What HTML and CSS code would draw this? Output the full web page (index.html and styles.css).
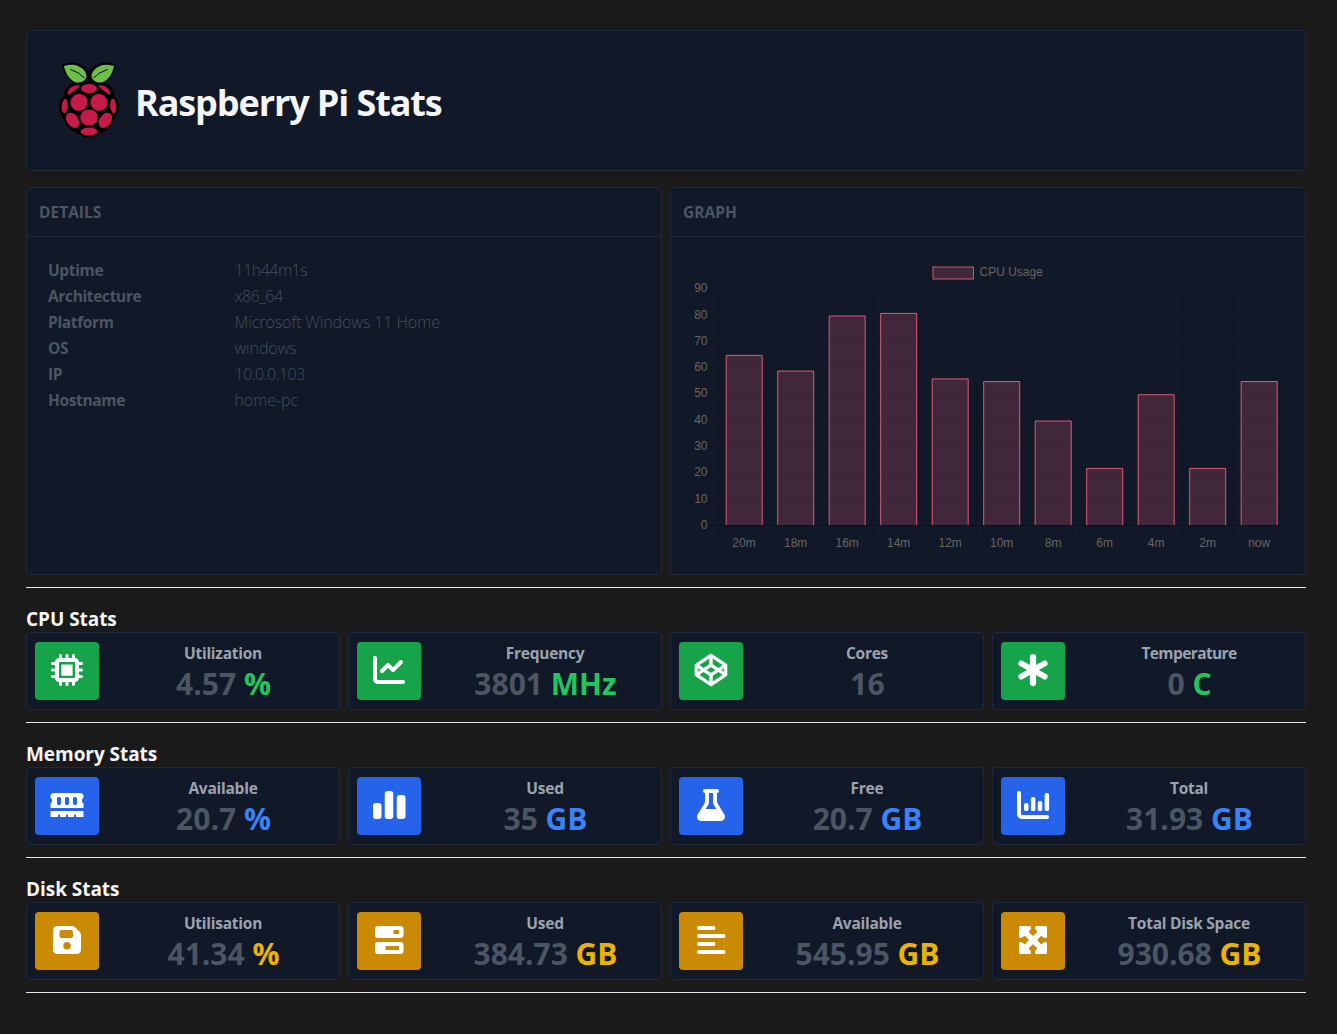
FILE: index.html
```html
<!DOCTYPE html>
<html lang="en">
<head>
<meta charset="utf-8">
<title>Raspberry Pi Stats</title>
<link rel="stylesheet" href="styles.css">
</head>
<body>
<main class="page">
  <header class="card banner">
    <svg class="logo" viewBox="0 0 60 76" aria-hidden="true">
      <path stroke="#000" stroke-width="1.200" d="M30 20C27 21 22 20 17 20C10 19 5 11 4 4C3 2 5 2 7 2C13 0 26 1 30 12C34 1 47 0 53 2C55 2 57 2 56 4C55 11 50 19 43 20L49 23C54 27 55 31 55 35C59 39 60 44 59 48C58 52 56 55 54 58C52 66 44 70 39 72C34 76 26 76 21 72C16 70 8 66 6 58C4 55 2 52 1 48C0 44 1 39 5 35C5 31 6 27 11 23L17 20Z"/>
      <g fill="#6cc04a">
        <path d="M5 4L9 3L13 2.700C21 3 27 8 27.500 14C27 19 22 21 17 20.500C11 18 7 13 5 4Z"/>
        <path d="M55 4L51 3L47 2.700C39 3 33 8 32.500 14C33 19 38 21 43 20.500C49 18 53 13 55 4Z"/>
      </g>
      <path d="M11.500 7.500Q20 10 25.500 16M48.500 7.500Q40 10 34.500 16" fill="none" stroke="#000" stroke-width="1"/>
      <g fill="#c51a4a">
        <ellipse cx="30" cy="26.500" rx="8" ry="4.500"/>
        <path d="M9 33C8 27 14 22 21 23.500C18 27 14 30 9 33ZM51 33C52 27 46 22 39 23.500C42 27 46 30 51 33Z"/>
        <ellipse cx="20" cy="40.300" rx="8.700" ry="8.400" transform="rotate(-35 20 40.300)"/>
        <ellipse cx="40" cy="40.300" rx="8.700" ry="8.400" transform="rotate(35 40 40.300)"/>
        <ellipse cx="5.800" cy="44" rx="3" ry="7.300" transform="rotate(5 5.800 44)"/>
        <ellipse cx="54.200" cy="44" rx="3" ry="7.300" transform="rotate(-5 54.200 44)"/>
        <ellipse cx="30" cy="55.500" rx="8.800" ry="8"/>
        <ellipse cx="13.600" cy="58.300" rx="5.700" ry="8.400" transform="rotate(-35 13.600 58.300)"/>
        <ellipse cx="46.400" cy="58.300" rx="5.700" ry="8.400" transform="rotate(35 46.400 58.300)"/>
        <ellipse cx="30" cy="69.500" rx="8.400" ry="4"/>
      </g>
    </svg>
    <h1>Raspberry Pi Stats</h1>
  </header>

  <div class="panels">
    <section class="card panel">
      <h2 class="panel-title">DETAILS</h2>
      <dl class="details">
        <dt>Uptime</dt><dd class="num">11h44m1s</dd>
        <dt>Architecture</dt><dd class="num">x86_64</dd>
        <dt>Platform</dt><dd>Microsoft Windows 11 Home</dd>
        <dt>OS</dt><dd>windows</dd>
        <dt>IP</dt><dd class="num">10.0.0.103</dd>
        <dt>Hostname</dt><dd>home-pc</dd>
      </dl>
    </section>
    <section class="card panel">
      <h2 class="panel-title">GRAPH</h2>
      <svg class="chart" viewBox="0 0 634 337">
        <path class="grid" d="M37.500 52.500H614M37.500 78.500H614M37.500 104.500H614M37.500 130.500H614M37.500 157.500H614M37.500 183.500H614M37.500 209.500H614M37.500 236.500H614M37.500 262.500H614M37.500 288.500H614M99.500 52V298M150.500 52V298M202.500 52V298M253.500 52V298M305.500 52V298M356.500 52V298M408.500 52V298M459.500 52V298M511.500 52V298M562.500 52V298"/>
        <path class="grid axis" d="M47.500 52V298M37.500 288.500H614"/>
        <rect class="key" x="262" y="30" width="40.500" height="12"/>
        <text class="legend" x="308.500" y="39">CPU Usage</text>
        <g class="bars">
          <path d="M55.200 288V118.400H91.200V288"/>
          <path d="M106.700 288V134.100H142.700V288"/>
          <path d="M158.200 288V79H194.200V288"/>
          <path d="M209.700 288V76.400H245.700V288"/>
          <path d="M261.200 288V141.900H297.200V288"/>
          <path d="M312.700 288V144.500H348.700V288"/>
          <path d="M364.200 288V184H400.200V288"/>
          <path d="M415.700 288V231.400H451.700V288"/>
          <path d="M467.200 288V157.700H503.200V288"/>
          <path d="M518.700 288V231.400H554.700V288"/>
          <path d="M570.200 288V144.500H606.200V288"/>
        </g>
        <g class="ticks-y">
          <text x="36.500" y="55">90</text><text x="36.500" y="82">80</text><text x="36.500" y="108">70</text><text x="36.500" y="134">60</text><text x="36.500" y="160">50</text><text x="36.500" y="187">40</text><text x="36.500" y="213">30</text><text x="36.500" y="239">20</text><text x="36.500" y="266">10</text><text x="36.500" y="292">0</text>
        </g>
        <g class="ticks-x">
          <text x="73" y="310">20m</text><text x="124.700" y="310">18m</text><text x="176.200" y="310">16m</text><text x="227.700" y="310">14m</text><text x="279.200" y="310">12m</text><text x="330.700" y="310">10m</text><text x="382.200" y="310">8m</text><text x="433.700" y="310">6m</text><text x="485.200" y="310">4m</text><text x="536.700" y="310">2m</text><text x="588.200" y="310">now</text>
        </g>
      </svg>
    </section>
  </div>

  <section class="group green">
    <h2>CPU Stats</h2>
    <div class="stats">
      <article class="card stat">
        <div class="icon"><svg viewBox="0 0 512 512"><path fill-rule="evenodd" d="M176 24c0-13.300-10.700-24-24-24s-24 10.700-24 24v40c-35.300 0-64 28.700-64 64H24c-13.300 0-24 10.700-24 24s10.700 24 24 24h40v56H24c-13.300 0-24 10.700-24 24s10.700 24 24 24h40v56H24c-13.300 0-24 10.700-24 24s10.700 24 24 24h40c0 35.300 28.700 64 64 64v40c0 13.300 10.700 24 24 24s24-10.700 24-24v-40h56v40c0 13.300 10.700 24 24 24s24-10.700 24-24v-40h56v40c0 13.300 10.700 24 24 24s24-10.700 24-24v-40c35.300 0 64-28.700 64-64h40c13.300 0 24-10.700 24-24s-10.700-24-24-24h-40v-56h40c13.300 0 24-10.700 24-24s-10.700-24-24-24h-40v-56h40c13.300 0 24-10.700 24-24s-10.700-24-24-24h-40c0-35.300-28.700-64-64-64V24c0-13.300-10.700-24-24-24s-24 10.700-24 24v40h-56V24c0-13.300-10.700-24-24-24s-24 10.700-24 24v40h-56V24zM144 128h224c8.800 0 16 7.200 16 16v224c0 8.800-7.200 16-16 16H144c-8.800 0-16-7.200-16-16V144c0-8.800 7.200-16 16-16zM346 166H166v180h180V166z"/></svg></div>
        <div class="reading"><h3>Utilization</h3><p>4.57 <b>%</b></p></div>
      </article>
      <article class="card stat">
        <div class="icon"><svg viewBox="0 0 512 512"><path d="M64 64c0-17.700-14.300-32-32-32S0 46.300 0 64V400c0 44.200 35.800 80 80 80H480c17.700 0 32-14.300 32-32s-14.300-32-32-32H80c-8.800 0-16-7.200-16-16V64zm406.600 86.600c12.500-12.500 12.500-32.800 0-45.300s-32.800-12.500-45.300 0L320 210.700l-57.400-57.400c-12.500-12.500-32.800-12.500-45.300 0l-96 96c-12.500 12.500-12.500 32.800 0 45.300s32.800 12.500 45.300 0L240 221.300l57.400 57.400c12.500 12.500 32.800 12.500 45.300 0l128-128z"/></svg></div>
        <div class="reading"><h3>Frequency</h3><p>3801 <b>MHz</b></p></div>
      </article>
      <article class="card stat">
        <div class="icon"><svg viewBox="0 0 512 512"><path stroke="#fff" stroke-width="10" d="M502.285 159.704l-234-156c-7.987-4.915-16.511-4.960-24.571 0l-234 156C3.714 163.703 0 170.847 0 177.989v155.999c0 7.143 3.714 14.286 9.715 18.286l234 156.022c7.987 4.915 16.511 4.960 24.571 0l234-156.022c6-3.999 9.715-11.143 9.715-18.286V177.989c-.001-7.142-3.715-14.286-9.716-18.285zM278 63.131l172.286 114.858-76.857 51.429L278 165.703V63.131zm-44 0v102.572l-95.429 63.715-76.857-51.429L234 63.131zM44 219.132l55.143 36.857L44 292.847v-73.715zm190 229.715L61.714 333.989l76.857-51.429L234 346.275v102.572zm22-140.858l-77.715-52 77.715-52 77.715 52-77.715 52zm22 140.858V346.275l95.429-63.715 76.857 51.429L278 448.847zm190-156l-55.143-36.857L468 219.132v73.715z"/></svg></div>
        <div class="reading"><h3>Cores</h3><p>16</p></div>
      </article>
      <article class="card stat">
        <div class="icon"><svg viewBox="0 0 512 512"><g fill="none" stroke="#fff" stroke-width="96" stroke-linecap="round"><path d="M256 48V464" stroke-width="100"/><path d="M70 152L442 360M442 152L70 360"/></g></svg></div>
        <div class="reading"><h3 class="tight">Temperature</h3><p>0 <b>C</b></p></div>
      </article>
    </div>
  </section>

  <section class="group blue">
    <h2>Memory Stats</h2>
    <div class="stats">
      <article class="card stat">
        <div class="icon"><svg viewBox="0 0 512 512"><path fill-rule="evenodd" d="M48 64H464C490 64 520 82 520 108V140C502 148 494 168 494 184S502 222 520 230V304H-8V230C10 222 18 202 18 184S10 148 -8 140V108C-8 82 22 64 48 64ZM128 128C112 128 96 138 96 160V224C96 246 112 256 128 256S160 246 160 224V160C160 138 144 128 128 128ZM256 128C240 128 224 138 224 160V224C224 246 240 256 256 256S288 246 288 224V160C288 138 272 128 256 128ZM384 128C368 128 352 138 352 160V224C352 246 368 256 384 256S416 246 416 224V160C416 138 400 128 384 128ZM-8 352H520V448H400V424A16 16 0 0 0 368 424V448H272V424A16 16 0 0 0 240 424V448H144V424A16 16 0 0 0 112 424V448H-8Z"/></svg></div>
        <div class="reading"><h3>Available</h3><p>20.7 <b>%</b></p></div>
      </article>
      <article class="card stat">
        <div class="icon"><svg viewBox="0 0 512 512"><rect x="0" y="224" width="136" height="256" rx="44"/><rect x="188" y="32" width="136" height="448" rx="44"/><rect x="380" y="96" width="140" height="384" rx="44"/></svg></div>
        <div class="reading"><h3>Used</h3><p>35 <b>GB</b></p></div>
      </article>
      <article class="card stat">
        <div class="icon"><svg viewBox="-32 0 512 512"><path d="M288 0H160 128C110.300 0 96 14.300 96 32s14.300 32 32 32V196.800c0 11.800-3.300 23.500-9.500 33.500L10.300 406.200C3.600 417.200 0 429.700 0 442.600C0 480.900 31.100 512 69.400 512H378.600c38.300 0 69.400-31.100 69.400-69.400c0-12.800-3.600-25.400-10.300-36.400L329.500 230.400c-6.200-10.100-9.500-21.700-9.500-33.500V64c17.700 0 32-14.300 32-32s-14.300-32-32-32H288zM192 196.800V64h64V196.800c0 23.700 6.600 46.900 19 67.100L309.500 320h-171L173 263.900c12.400-20.200 19-43.400 19-67.100z"/></svg></div>
        <div class="reading"><h3>Free</h3><p>20.7 <b>GB</b></p></div>
      </article>
      <article class="card stat">
        <div class="icon"><svg viewBox="0 0 512 512"><path d="M64 64c0-17.700-14.300-32-32-32S0 46.300 0 64V400c0 44.200 35.800 80 80 80H480c17.700 0 32-14.300 32-32s-14.300-32-32-32H80c-8.800 0-16-7.200-16-16V64z"/><rect x="112" y="224" width="72" height="128" rx="30"/><rect x="222" y="128" width="72" height="224" rx="30"/><rect x="332" y="192" width="72" height="160" rx="30"/><rect x="442" y="64" width="72" height="288" rx="30"/></svg></div>
        <div class="reading"><h3>Total</h3><p>31.93 <b>GB</b></p></div>
      </article>
    </div>
  </section>

  <section class="group amber">
    <h2>Disk Stats</h2>
    <div class="stats">
      <article class="card stat">
        <div class="icon"><svg viewBox="-32 0 512 512"><path fill-rule="evenodd" d="M64 32C28.700 32 0 60.700 0 96V416c0 35.300 28.700 64 64 64H384c35.300 0 64-28.700 64-64V173.300c0-17-6.700-33.300-18.700-45.300L352 50.700C340 38.700 323.700 32 306.700 32H64zM104 128c0-17.700 14.300-32 32-32H288c17.700 0 32 14.300 32 32v64c0 17.700-14.300 32-32 32H136c-17.700 0-32-14.300-32-32V128zM224 288a60 60 0 1 1 0 120 60 60 0 1 1 0-120z"/></svg></div>
        <div class="reading"><h3>Utilisation</h3><p>41.34 <b>%</b></p></div>
      </article>
      <article class="card stat">
        <div class="icon"><svg viewBox="-32 0 512 512"><path fill-rule="evenodd" d="M48 32H408A48 48 0 0 1 456 80V176A48 48 0 0 1 408 224H48A48 48 0 0 1 0 176V80A48 48 0 0 1 48 32ZM296 96V160H384V96ZM48 288H408A48 48 0 0 1 456 336V432A48 48 0 0 1 408 480H48A48 48 0 0 1 0 432V336A48 48 0 0 1 48 288ZM168 352V416H384V352Z"/></svg></div>
        <div class="reading"><h3>Used</h3><p>384.73 <b>GB</b></p></div>
      </article>
      <article class="card stat">
        <div class="icon"><svg viewBox="-32 0 512 512"><path d="M32 64H264M32 192H424M32 320H264M32 448H424" stroke="#fff" stroke-width="64" stroke-linecap="round"/></svg></div>
        <div class="reading"><h3>Available</h3><p>545.95 <b>GB</b></p></div>
      </article>
      <article class="card stat">
        <div class="icon"><svg viewBox="0 0 512 512"><path d="M48 32H208L224 48V72L186 126L256 190L326 126L288 72V48L304 32H464L480 48V208L464 224H440L386 186L322 256L386 326L440 288H464L480 304V464L464 480H304L288 464V440L326 386L256 322L186 386L224 440V464L208 480H48L32 464V304L48 288H72L126 326L190 256L126 186L72 224H48L32 208V48Z"/></svg></div>
        <div class="reading"><h3>Total Disk Space</h3><p>930.68 <b>GB</b></p></div>
      </article>
    </div>
  </section>
</main>
</body>
</html>
```

FILE: styles.css
```css
* { box-sizing: border-box; margin: 0; padding: 0; }
body { background: #1a1a1a; color: #f3f4f6; font: 16px/24px "Open Sans", "Noto Sans", sans-serif; }
svg { overflow: visible; }
.page { width: 1280px; margin: 30px 0 0 26px; }
.card { background: #111827; border: 1px solid #1f2937; border-radius: 4px; }
.banner { height: 141px; display: flex; align-items: center; padding: 0 32px; gap: 16px; }
.logo { width: 60px; height: 76px; margin-bottom: 1px; }
h1 { font-size: 36px; line-height: 40px; font-weight: 700; padding-top: 5px; letter-spacing: -1.1px; }
.panels { display: grid; grid-template-columns: 1fr 1fr; gap: 8px; margin-top: 16px; padding-bottom: 12px; border-bottom: 1px solid #e5e7eb; }
.panel { height: 388px; }
.panel-title { height: 49px; padding: 12px; font-size: 15.5px; line-height: 25px; color: #4b5563; border-bottom: 1px solid #1f2937; }
.details { display: grid; grid-template-columns: 186px 1fr; grid-auto-rows: 26px; line-height: 26px; padding: 20px 21px; }
.details dt { font-size: 15.5px; letter-spacing: -.35px; font-weight: 700; color: #4b5563; }
.details dd { font-weight: 300; padding-left: .5px; letter-spacing: -.08px; color: #434f60; }
.details .num { letter-spacing: -.5px; }
.chart { display: block; width: 634px; height: 337px; font: 12px "Liberation Sans", Arial, sans-serif; }
.chart text { fill: #666; }
.grid { stroke: rgba(0, 0, 0, .1); fill: none; }
.axis { stroke: rgba(0, 0, 0, .15); }
.key { fill: rgba(255, 99, 132, .2); stroke: rgb(255, 99, 132); stroke-opacity: .8; }
.bars { fill: rgba(255, 99, 132, .2); stroke: rgb(255, 99, 132); stroke-opacity: .85; }
.ticks-y { text-anchor: end; }
.ticks-x { text-anchor: middle; }
.group { height: 135px; padding-top: 18px; border-bottom: 1px solid #e5e7eb; }
.group h2 { font-size: 19px; line-height: 27px; margin-bottom: -1px; font-weight: 700; letter-spacing: -.05px; }
.stats { display: grid; grid-template-columns: repeat(4, 1fr); gap: 8px; }
.stat { height: 78px; display: flex; align-items: center; padding: 8px; gap: 16px; }
.icon { width: 64px; height: 58px; border-radius: 4px; display: grid; place-items: center; padding-bottom: 2px; }
.icon svg { width: 32px; height: 32px; fill: #fff; }
.reading { flex: 1; text-align: center; font-weight: 700; }
.reading h3 { font-size: 15.5px; line-height: 24px; letter-spacing: -.25px; color: #9ca3af; }
.reading h3.tight { letter-spacing: -.6px; }
.reading p { font-size: 30px; line-height: 38px; margin-bottom: -2px; padding-left: 1px; color: #4b5563; }
.reading b { font-weight: 700; }
.green .icon { background: #16a34a; }
.green b { color: #22c55e; }
.blue .icon { background: #2563eb; }
.blue b { color: #3b82f6; }
.amber .icon { background: #ca8a04; }
.amber b { color: #eab308; }
```
